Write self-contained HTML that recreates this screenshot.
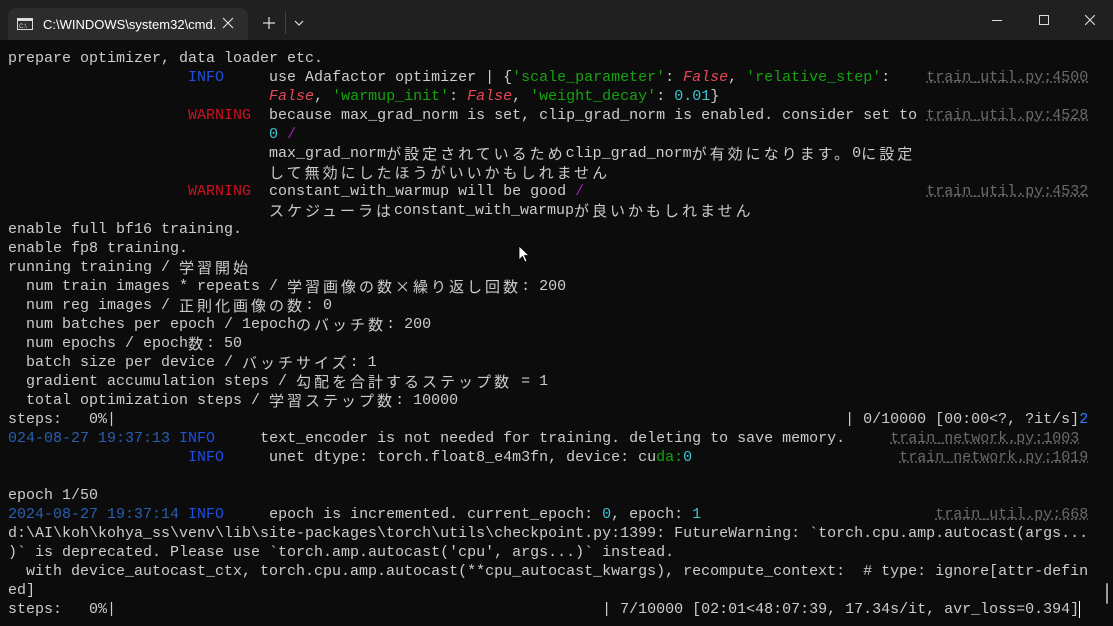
<!DOCTYPE html>
<html><head><meta charset="utf-8"><style>
*{margin:0;padding:0}
body{width:1113px;height:626px;background:#0c0c0c;overflow:hidden;position:relative;font-family:"Liberation Mono","Noto Sans CJK JP",monospace;font-size:15px;color:#cccccc}
.tb{position:absolute;left:0;top:0;width:1113px;height:40px;background:#202020}
.tab{position:absolute;left:8px;top:8px;width:240px;height:32px;background:#2c2c2c;border-radius:8px 8px 0 0}
.tt{position:absolute;left:43px;top:17px;font:13px "Liberation Sans",sans-serif;color:#fff}
.l{position:absolute;left:8px;white-space:pre;line-height:19px;height:19px}
.j{letter-spacing:3px;font-family:"Noto Sans CJK JP",sans-serif;font-size:15px;display:inline-block;height:19px;line-height:19px;vertical-align:top;overflow:visible}
.in{color:#1d4fe0}.wa{color:#d0101f}.f{color:#e74856;font-style:italic}.g{color:#16a30e}.c{color:#3bc6d0}.p{color:#9a22b0}
.r{color:#6a6a6a;text-decoration:underline dotted #6a6a6a}.ts{color:#2a5fb0}.b2{color:#3b78ff}
</style></head><body>
<div class="tb"><div class="tab"></div>
<svg style="position:absolute;left:17px;top:18px" width="16" height="12"><rect x="0.5" y="0.5" width="15" height="11" fill="none" stroke="#ddd"/><rect x="1" y="1" width="14" height="2" fill="#ddd"/><text x="2" y="10" font-size="6" fill="#ddd" font-family="Liberation Sans">C:\</text></svg>
<div class="tt">C:\WINDOWS\system32\cmd.</div>
<svg style="position:absolute;left:222px;top:17px" width="12" height="12"><path d="M1 1L11 11M11 1L1 11" stroke="#ddd" stroke-width="1.2"/></svg>
<svg style="position:absolute;left:263px;top:17px" width="12" height="12"><path d="M6 0V12M0 6H12" stroke="#ddd" stroke-width="1.2"/></svg>
<div style="position:absolute;left:285px;top:12px;width:1px;height:22px;background:#444"></div>
<svg style="position:absolute;left:294px;top:20px" width="10" height="6"><path d="M1 1L5 5L9 1" stroke="#ddd" fill="none" stroke-width="1.2"/></svg>
<div style="position:absolute;left:992px;top:20px;width:10px;height:1px;background:#ddd"></div>
<div style="position:absolute;left:1039px;top:15px;width:8px;height:8px;border:1px solid #ddd"></div>
<svg style="position:absolute;left:1085px;top:15px" width="10" height="10"><path d="M0 0L10 10M10 0L0 10" stroke="#ddd" stroke-width="1.1"/></svg>
</div>
<div class="l" style="top:49px">prepare optimizer, data loader etc.</div>
<div class="l" style="top:68px">                    <span class="in">INFO</span>     use Adafactor optimizer | {<span class="g">'scale_parameter'</span>: <span class="f">False</span>, <span class="g">'relative_step'</span>:    <span class="r">train_util.py:4500</span></div>
<div class="l" style="top:87px">                             <span class="f">False</span>, <span class="g">'warmup_init'</span>: <span class="f">False</span>, <span class="g">'weight_decay'</span>: <span class="c">0.01</span>}</div>
<div class="l" style="top:106px">                    <span class="wa">WARNING</span>  because max_grad_norm is set, clip_grad_norm is enabled. consider set to <span class="r">train_util.py:4528</span></div>
<div class="l" style="top:125px">                             <span class="c">0</span> <span class="p">/</span></div>
<div class="l" style="top:144px">                             max_grad_norm<span class="j">が設定されているため</span>clip_grad_norm<span class="j">が有効になります。</span>0<span class="j">に設定</span></div>
<div class="l" style="top:163px">                             <span class="j">して無効にしたほうがいいかもしれません</span></div>
<div class="l" style="top:182px">                    <span class="wa">WARNING</span>  constant_with_warmup will be good <span class="p">/</span>                                      <span class="r">train_util.py:4532</span></div>
<div class="l" style="top:201px">                             <span class="j">スケジューラは</span>constant_with_warmup<span class="j">が良いかもしれません</span></div>
<div class="l" style="top:220px">enable full bf16 training.</div>
<div class="l" style="top:239px">enable fp8 training.</div>
<div class="l" style="top:258px">running training / <span class="j">学習開始</span></div>
<div class="l" style="top:277px">  num train images * repeats / <span class="j">学習画像の数×繰り返し回数</span>: 200</div>
<div class="l" style="top:296px">  num reg images / <span class="j">正則化画像の数</span>: 0</div>
<div class="l" style="top:315px">  num batches per epoch / 1epoch<span class="j">のバッチ数</span>: 200</div>
<div class="l" style="top:334px">  num epochs / epoch<span class="j">数</span>: 50</div>
<div class="l" style="top:353px">  batch size per device / <span class="j">バッチサイズ</span>: 1</div>
<div class="l" style="top:372px">  gradient accumulation steps / <span class="j">勾配を合計するステップ数</span> = 1</div>
<div class="l" style="top:391px">  total optimization steps / <span class="j">学習ステップ数</span>: 10000</div>
<div class="l" style="top:410px">steps:   0%|                                                                                 | 0/10000 [00:00&lt;?, ?it/s]<span class="b2">2</span></div>
<div class="l" style="top:429px"><span class="ts">024-08-27 19:37:13</span> <span class="in">INFO</span>     text_encoder is not needed for training. deleting to save memory.     <span class="r">train_network.py:1003</span></div>
<div class="l" style="top:448px">                    <span class="in">INFO</span>     unet dtype: torch.float8_e4m3fn, device: cu<span class="g">da:</span><span class="c">0</span>                       <span class="r">train_network.py:1019</span></div>
<div class="l" style="top:486px">epoch 1/50</div>
<div class="l" style="top:505px"><span class="ts">2024-08-27 19:37:14</span> <span class="in">INFO</span>     epoch is incremented. current_epoch: <span class="c">0</span>, epoch: <span class="c">1</span>                          <span class="r">train_util.py:668</span></div>
<div class="l" style="top:524px">d:\AI\koh\kohya_ss\venv\lib\site-packages\torch\utils\checkpoint.py:1399: FutureWarning: `torch.cpu.amp.autocast(args...</div>
<div class="l" style="top:543px">)` is deprecated. Please use `torch.amp.autocast('cpu', args...)` instead.</div>
<div class="l" style="top:562px">  with device_autocast_ctx, torch.cpu.amp.autocast(**cpu_autocast_kwargs), recompute_context:  # type: ignore[attr-defin</div>
<div class="l" style="top:581px">ed]</div>
<div class="l" style="top:600px">steps:   0%|                                                      | 7/10000 [02:01&lt;48:07:39, 17.34s/it, avr_loss=0.394]</div>
<div style="position:absolute;left:1079px;top:601px;width:1px;height:17px;background:#fff"></div>
<div style="position:absolute;left:1106px;top:583px;width:2px;height:21px;background:#9a9a9a;border-radius:1px"></div>
<svg style="position:absolute;left:518px;top:245px" width="12" height="18"><path d="M1 1V15L4.5 11.5L7 17L9 16L6.5 10.5H11Z" fill="#fff" stroke="#000" stroke-width="0.8"/></svg>
</body></html>
